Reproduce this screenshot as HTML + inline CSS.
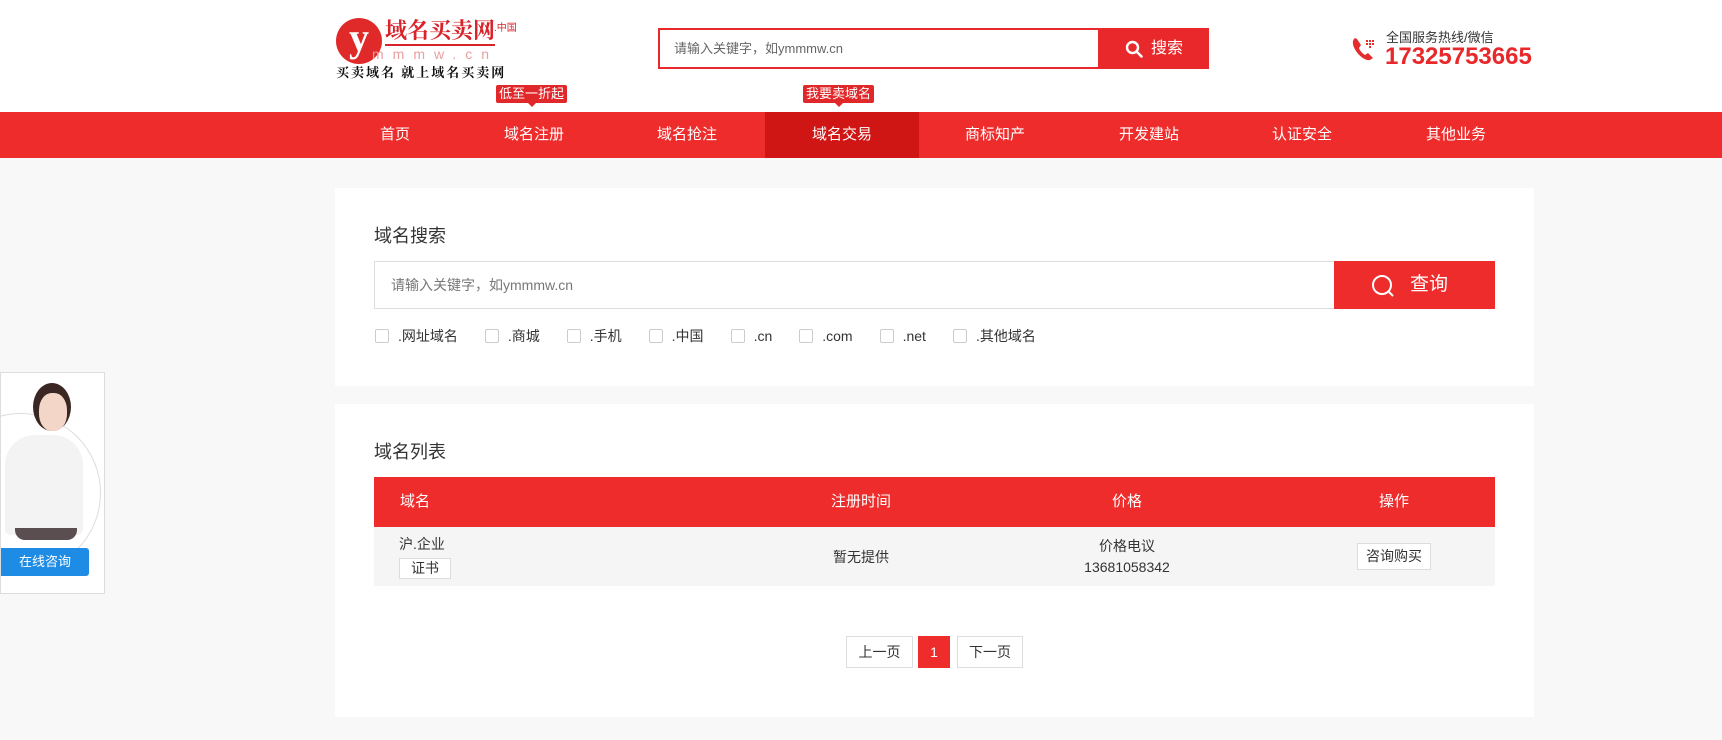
<!DOCTYPE html>
<html><head><meta charset="utf-8"><style>
*{margin:0;padding:0;box-sizing:border-box}
body{width:1722px;height:740px;overflow:hidden;background:#f8f8f8;font-family:"Liberation Sans","Noto Sans CJK SC",sans-serif;color:#333;position:relative}
.abs{position:absolute}
.header{position:absolute;left:0;top:0;width:1722px;height:112px;background:#fff}
.nav{position:absolute;left:0;top:112px;width:1722px;height:46px;background:#ee2c2c}
.nav div{position:absolute;top:0;height:46px;line-height:46px;width:154px;text-align:center;color:#fff;font-size:15px}
.badge{position:absolute;height:18px;line-height:18px;background:#e0282a;color:#fff;font-size:13px;padding:0 3px;border-radius:2px}
.badge:after{content:"";position:absolute;left:50%;margin-left:-4px;bottom:-4px;border:4px solid transparent;border-bottom:0;border-top-color:#e0282a}
.card{position:absolute;left:335px;width:1199px;background:#fff}
.cb{display:inline-block;width:14px;height:14px;border:1px solid #ccc;border-radius:2px;vertical-align:-2px;margin-right:9px}
.g{margin-left:27px}
.th{position:absolute;color:#fff;font-size:15px;top:0;line-height:50px}
.pg{position:absolute;top:636px;height:32px;line-height:30px;border:1px solid #ddd;background:#fff;font-size:14px;text-align:center}
</style></head><body>
<div class="header"></div>
<div class="abs" style="left:336px;top:18px;width:46px;height:46px;border-radius:50%;background:#e02a2a;color:#fff;font:bold 40px/40px 'Liberation Serif',serif;text-align:center">y</div>
<div class="abs" style="left:385px;top:16px;font:bold 22px/28px 'Noto Serif CJK SC',serif;color:#d8232a;border-bottom:2px solid #d8232a">域名买卖网</div>
<div class="abs" style="left:494px;top:19px;font-size:10px;color:#d8232a">.中国</div>
<div class="abs" style="left:372px;top:46px;font-size:14px;letter-spacing:9px;color:#e8a0a0">mmmw.cn</div>
<div class="abs" style="left:336px;top:64px;font:bold 13px/16px 'Noto Serif CJK SC',serif;color:#111;letter-spacing:2px">买卖域名 就上域名买卖网</div>
<div class="abs" style="left:658px;top:28px;width:442px;height:41px;border:2px solid #e8282a;background:#fff;font-size:13px;color:#666;line-height:37px;padding-left:14px">请输入关键字，如ymmmw.cn</div>
<div class="abs" style="left:1099px;top:28px;width:110px;height:41px;background:#e8282a;color:#fff;font-size:16px;line-height:41px;padding-left:52px">搜索
<svg style="position:absolute;left:26px;top:12px" width="18" height="18" viewBox="0 0 18 18"><circle cx="7.5" cy="7.5" r="5.5" fill="none" stroke="#fff" stroke-width="2.4"/><path d="M11.5 11.5l5 5" stroke="#fff" stroke-width="2.6" stroke-linecap="round"/></svg></div>
<svg class="abs" style="left:1350px;top:35px" width="28" height="28" viewBox="0 0 28 28"><path d="M5 3c-3 2-3 7 1 13s10 10 14 9l3-2-5-5-3 2c-2-1-5-4-6-7l2-3-4-6z" fill="#e62d2d"/><g fill="#e62d2d"><rect x="16" y="5" width="2" height="2"/><rect x="19" y="5" width="2" height="2"/><rect x="22" y="5" width="2" height="2"/><rect x="16" y="8" width="2" height="2"/><rect x="19" y="8" width="2" height="2"/><rect x="22" y="8" width="2" height="2"/><rect x="19" y="11" width="2" height="2"/></g></svg>
<div class="abs" style="left:1386px;top:27px;font-size:13px;color:#333">全国服务热线/微信</div>
<div class="abs" style="left:1385px;top:43px;font-size:24px;font-weight:bold;color:#e8282a;font-family:'Liberation Sans',sans-serif">17325753665</div>
<div class="badge" style="left:496px;top:85px">低至一折起</div>
<div class="badge" style="left:803px;top:85px">我要卖域名</div>
<div class="nav">
<div style="left:318px">首页</div><div style="left:457px">域名注册</div><div style="left:610px">域名抢注</div>
<div style="left:765px;background:#d01515">域名交易</div><div style="left:918px">商标知产</div><div style="left:1072px">开发建站</div>
<div style="left:1225px">认证安全</div><div style="left:1379px">其他业务</div>
</div>
<div class="card" style="top:188px;height:198px">
<div class="abs" style="left:39px;top:34px;font-size:18px;color:#333">域名搜索</div>
<div class="abs" style="left:39px;top:73px;width:961px;height:48px;border:1px solid #ddd;font-size:14px;color:#777;line-height:46px;padding-left:16px">请输入关键字，如ymmmw.cn</div>
<div class="abs" style="left:999px;top:73px;width:161px;height:48px;background:#ee2c2c;color:#fff;font-size:19px;line-height:48px;padding-left:76px">查询
<svg style="position:absolute;left:37px;top:13px" width="24" height="24" viewBox="0 0 24 24"><circle cx="11" cy="11" r="9" fill="none" stroke="#fff" stroke-width="2"/><path d="M17.5 17.5l4 4" stroke="#fff" stroke-width="2" stroke-linecap="round"/></svg></div>
<div class="abs" style="left:40px;top:138px;font-size:14px;color:#333;white-space:nowrap">
<span class="cb"></span>.网址域名<span class="cb g"></span>.商城<span class="cb g"></span>.手机<span class="cb g"></span>.中国<span class="cb g"></span>.cn<span class="cb g"></span>.com<span class="cb g"></span>.net<span class="cb g"></span>.其他域名</div>
</div>
<div class="card" style="top:404px;height:313px">
<div class="abs" style="left:39px;top:34px;font-size:18px;color:#333">域名列表</div>
<div class="abs" style="left:39px;top:73px;width:1121px;height:50px;background:#ee2c2c">
<div class="th" style="left:26px">域名</div>
<div class="th" style="left:447px;width:80px;text-align:center">注册时间</div>
<div class="th" style="left:713px;width:80px;text-align:center">价格</div>
<div class="th" style="left:980px;width:80px;text-align:center">操作</div>
</div>
<div class="abs" style="left:39px;top:123px;width:1121px;height:59px;background:#f5f5f5;font-size:14px">
<div class="abs" style="left:25px;top:7px">沪.企业</div>
<div class="abs" style="left:25px;top:31px;width:52px;height:21px;border:1px solid #ddd;background:#fff;text-align:center;line-height:19px">证书</div>
<div class="abs" style="left:447px;top:20px;width:80px;text-align:center">暂无提供</div>
<div class="abs" style="left:653px;top:9px;width:200px;text-align:center;line-height:21px">价格电议<br>13681058342</div>
<div class="abs" style="left:983px;top:16px;width:74px;height:27px;border:1px solid #ddd;background:#fff;text-align:center;line-height:25px">咨询购买</div>
</div>
</div>
<div class="pg" style="left:846px;width:67px">上一页</div>
<div class="pg" style="left:918px;width:32px;background:#ee2c2c;border-color:#ee2c2c;color:#fff">1</div>
<div class="pg" style="left:957px;width:66px">下一页</div>
<div class="abs" style="left:0;top:372px;width:105px;height:222px;background:#fff;border:1px solid #ddd;overflow:hidden">
<div class="abs" style="left:-60px;top:40px;width:160px;height:160px;border-radius:50%;border:1px solid #ddd"></div>
<div class="abs" style="left:32px;top:10px;width:38px;height:48px;border-radius:50%;background:#3a2622"></div>
<div class="abs" style="left:38px;top:20px;width:28px;height:38px;border-radius:45%;background:#f3d6c8"></div>
<div class="abs" style="left:4px;top:62px;width:78px;height:100px;border-radius:30px 30px 6px 6px;background:#f3f3f3"></div>
<div class="abs" style="left:14px;top:155px;width:62px;height:12px;background:#5a4e50;border-radius:0 0 10px 10px"></div>
<div class="abs" style="left:0;top:175px;width:88px;height:28px;background:#1e8be5;color:#fff;font-size:13px;text-align:center;line-height:28px;border-radius:0 3px 3px 0">在线咨询</div>
</div>
</body></html>
